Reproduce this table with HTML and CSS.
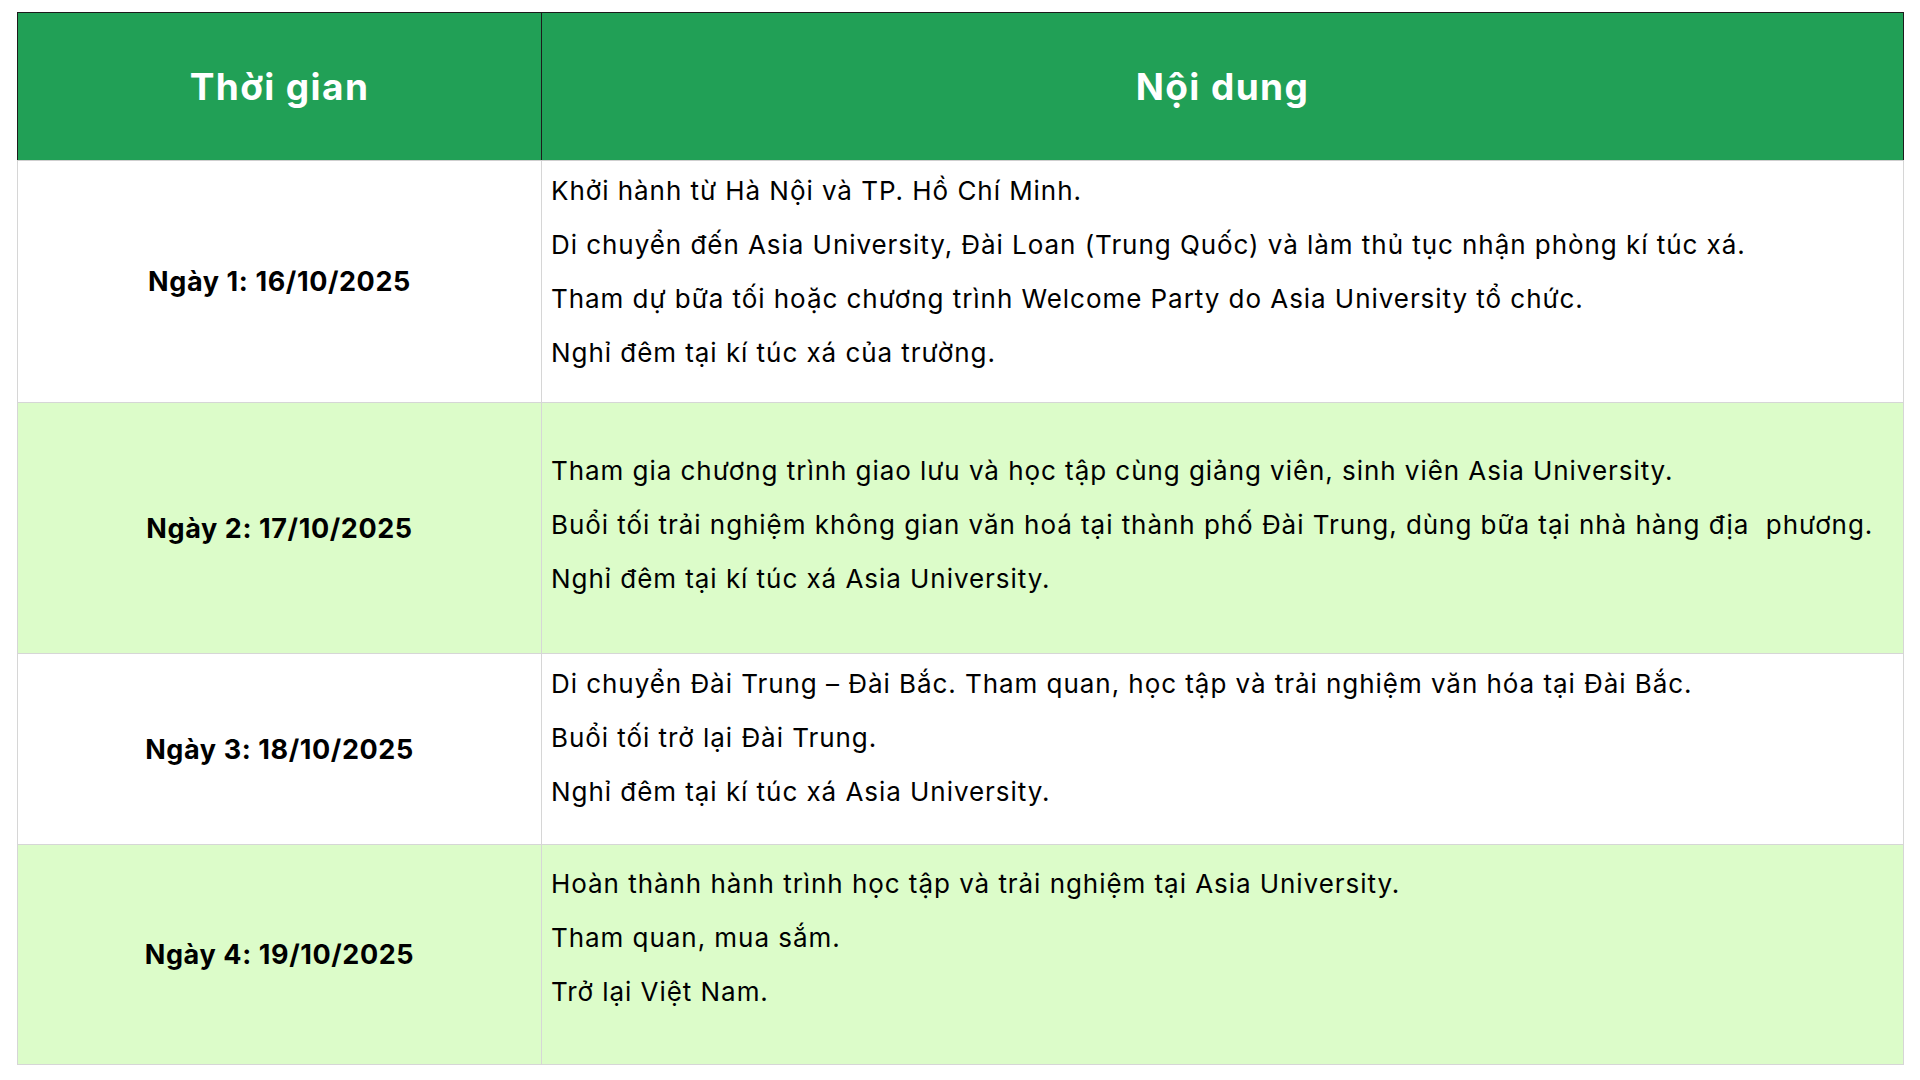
FILE: index.html
```html
<!DOCTYPE html>
<html lang="vi">
<head>
<meta charset="utf-8">
<title>Lịch trình</title>
<link rel="stylesheet" href="styles.css">
</head>
<body>
<table class="schedule">
  <colgroup>
    <col class="col-time">
    <col class="col-content">
  </colgroup>
  <thead>
    <tr class="head-row">
      <th>Thời gian</th>
      <th>Nội dung</th>
    </tr>
  </thead>
  <tbody>
    <tr class="row row-1">
      <td class="day">Ngày 1: 16/10/2025</td>
      <td class="content">
        <p>Khởi hành từ Hà Nội và TP. Hồ Chí Minh.</p>
        <p>Di chuyển đến Asia University, Đài Loan (Trung Quốc) và làm thủ tục nhận phòng kí túc xá.</p>
        <p>Tham dự bữa tối hoặc chương trình Welcome Party do Asia University tổ chức.</p>
        <p>Nghỉ đêm tại kí túc xá của trường.</p>
      </td>
    </tr>
    <tr class="row row-2 alt">
      <td class="day">Ngày 2: 17/10/2025</td>
      <td class="content">
        <p>Tham gia chương trình giao lưu và học tập cùng giảng viên, sinh viên Asia University.</p>
        <p>Buổi tối trải nghiệm không gian văn hoá tại thành phố Đài Trung, dùng bữa tại nhà hàng địa &nbsp;phương.</p>
        <p>Nghỉ đêm tại kí túc xá Asia University.</p>
      </td>
    </tr>
    <tr class="row row-3">
      <td class="day">Ngày 3: 18/10/2025</td>
      <td class="content">
        <p>Di chuyển Đài Trung – Đài Bắc. Tham quan, học tập và trải nghiệm văn hóa tại Đài Bắc.</p>
        <p>Buổi tối trở lại Đài Trung.</p>
        <p>Nghỉ đêm tại kí túc xá Asia University.</p>
      </td>
    </tr>
    <tr class="row row-4 alt">
      <td class="day">Ngày 4: 19/10/2025</td>
      <td class="content">
        <p>Hoàn thành hành trình học tập và trải nghiệm tại Asia University.</p>
        <p>Tham quan, mua sắm.</p>
        <p>Trở lại Việt Nam.</p>
      </td>
    </tr>
  </tbody>
</table>
</body>
</html>
```
FILE: styles.css
```css
html, body {
  margin: 0;
  padding: 0;
  background: #ffffff;
}

body {
  font-family: Inter, "Noto Sans", sans-serif;
  color: #000000;
}

.schedule {
  border-collapse: collapse;
  table-layout: fixed;
  width: 1887px;
  margin: 12px 0 0 17px;
}

.col-time {
  width: 524px;
}

.head-row th {
  height: 147px;
  padding: 0;
  background: #21a056;
  color: #ffffff;
  font-size: 37px;
  font-weight: 700;
  letter-spacing: 1.4px;
  text-align: center;
  vertical-align: middle;
  border: 1px solid #1c1c1c;
  border-bottom: 1px solid #cfcfcf;
}

.row td {
  border: 1px solid #d6d6d6;
  padding: 0;
}

.row.alt td {
  background: #dcfcc9;
}

.day {
  text-align: center;
  vertical-align: middle;
  font-size: 27px;
  font-weight: 700;
  letter-spacing: 0.6px;
}

.content {
  vertical-align: top;
  padding-left: 9px !important;
  font-size: 26px;
  font-weight: 400;
  letter-spacing: 0.95px;
}

.content p {
  margin: 0;
  line-height: 54px;
  white-space: nowrap;
}

.row-1 { height: 242px; }
.row-2 { height: 251px; }
.row-3 { height: 191px; }
.row-4 { height: 220px; }

.row-1 .content { padding-top: 3px; }
.row-2 .content { padding-top: 41px; }
.row-3 .content { padding-top: 3px; }
.row-4 .content { padding-top: 12px; }
```
